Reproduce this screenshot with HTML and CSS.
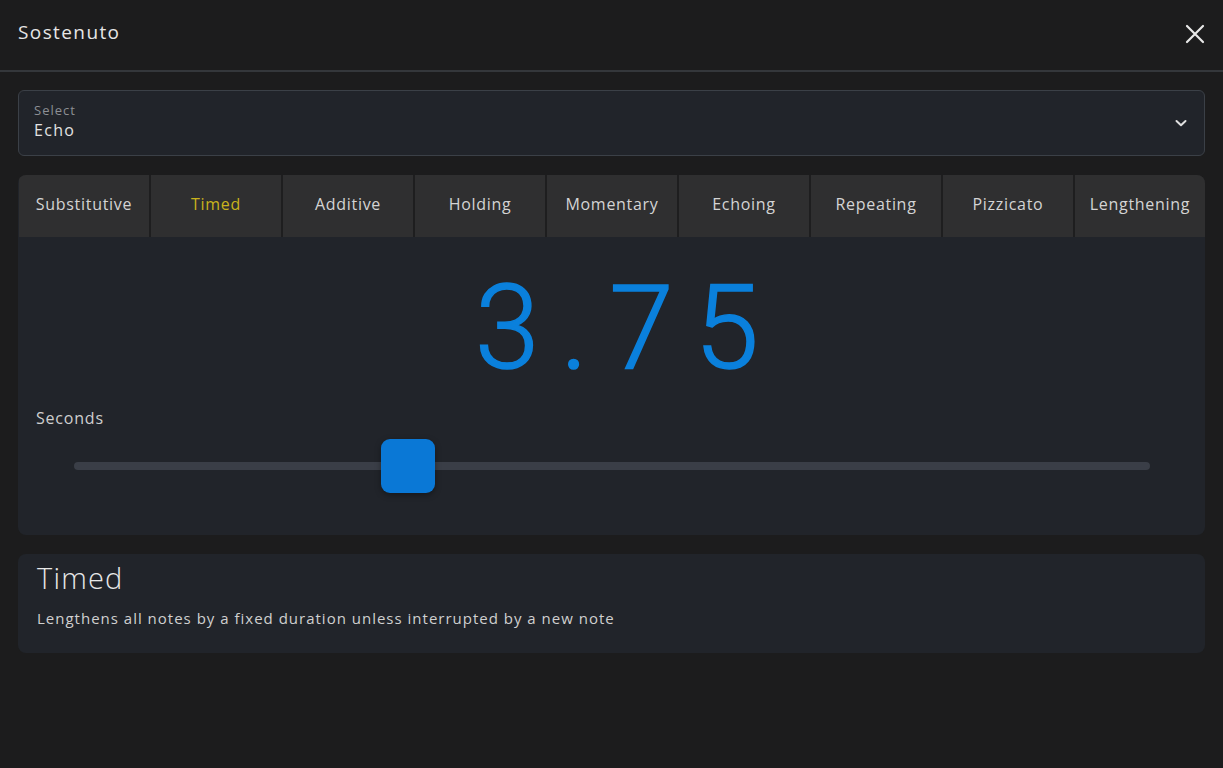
FILE: index.html
```html
<!doctype html>
<html>
<head>
<meta charset="utf-8">
<link rel="stylesheet" href="styles.css">
<title>Sostenuto</title>
</head>
<body>
<div class="header">
    <h2>Sostenuto</h2>
    <svg class="close" width="22" height="22" viewBox="0 0 22 22"><path d="M3 3L19 19M19 3L3 19" stroke="#e8e8e8" stroke-width="2.2" stroke-linecap="round"/></svg>
</div>
<div class="content">
    <div class="select">
        <div class="select-text">
            <span class="select-label">Select</span>
            <span class="select-value">Echo</span>
        </div>
        <svg width="14" height="10" viewBox="0 0 14 10"><path d="M2.5 3L7 7.2L11.5 3" fill="none" stroke="#e0e0e0" stroke-width="2" stroke-linecap="round" stroke-linejoin="round"/></svg>
    </div>

    <div class="panel">
        <div class="tabs">
            <div class="tab">Substitutive</div>
            <div class="tab active">Timed</div>
            <div class="tab">Additive</div>
            <div class="tab">Holding</div>
            <div class="tab">Momentary</div>
            <div class="tab">Echoing</div>
            <div class="tab">Repeating</div>
            <div class="tab">Pizzicato</div>
            <div class="tab">Lengthening</div>
        </div>
        <div class="panel-body">
            <div class="value">3.75</div>
            <div class="slider-label">Seconds</div>
            <div class="slider">
                <div class="track">
                    <div class="thumb" style="left: 28.5%"></div>
                </div>
            </div>
        </div>
    </div>

    <div class="info">
        <h3>Timed</h3>
        <p>Lengthens all notes by a fixed duration unless interrupted by a new note</p>
    </div>
</div>
</body>
</html>
```

FILE: styles.css
```css
h2,
h3,
p {
    margin: 0;
    padding: 0;
}
body {
    margin: 0;
    font-family: "Open Sans", Lato, sans-serif;
    color: #d6d6d6;
    background-color: #1c1c1d;
    height: 768px;
    overflow: hidden;
}
.header {
    height: 72px;
    box-sizing: border-box;
    padding: 0 18px;
    display: flex;
    align-items: center;
    justify-content: space-between;
    border-bottom: 2px solid #34373b;
}
.header h2 {
    font-size: 19px;
    font-weight: 400;
    color: #e6e6e6;
    letter-spacing: 1.4px;
    margin-top: -6px;
}
.close {
    margin-right: -1px;
    margin-top: -2px;
}
.content {
    padding: 18px 18px 0 18px;
}
.select {
    height: 66px;
    box-sizing: border-box;
    border: 1.5px solid #3b4047;
    border-radius: 6px;
    background-color: #21242a;
    padding: 0 16px 0 15px;
    display: flex;
    align-items: center;
    justify-content: space-between;
}
.select-text {
    display: flex;
    flex-direction: column;
    margin-top: -4px;
}
.select-label {
    font-size: 13px;
    letter-spacing: 1px;
    color: #8c8f94;
    line-height: 17px;
}
.select-value {
    font-size: 16px;
    letter-spacing: 1.3px;
    color: #e2e2e2;
    line-height: 22px;
}
.panel {
    margin-top: 19px;
    background-color: #21242a;
    border-radius: 8px;
    overflow: hidden;
}
.tabs {
    display: grid;
    grid-template-columns: repeat(9, 1fr);
    gap: 2px;
    background-color: #1e1e1f;
    margin-left: 1px;
}
.tab {
    height: 62px;
    box-sizing: border-box;
    padding-bottom: 4px;
    background-color: #2f2f30;
    display: flex;
    align-items: center;
    justify-content: center;
    font-size: 16px;
    letter-spacing: 0.7px;
    color: #d4d4d4;
}
.tab.active {
    color: #c9b31c;
}
.panel-body {
    height: 298px;
    padding: 0 18px;
}
.value {
    text-align: center;
    font-family: Roboto, "Liberation Sans", sans-serif;
    font-weight: 300;
    font-size: 116px;
    letter-spacing: 21px;
    line-height: 116px;
    color: #0a80dc;
    padding-top: 33px;
    padding-left: 32px;
    -webkit-text-stroke: 1.5px #0a80dc;
}
.slider-label {
    margin-top: 21px;
    font-size: 16px;
    letter-spacing: 0.8px;
    color: #cfcfcf;
}
.slider {
    padding: 0 37px 0 38px;
    margin-top: 10px;
    height: 54px;
    display: flex;
    align-items: center;
}
.track {
    position: relative;
    width: 100%;
    height: 8px;
    border-radius: 4px;
    background-color: #3a3e47;
}
.thumb {
    position: absolute;
    top: -23px;
    width: 54px;
    height: 54px;
    border-radius: 9px;
    background-color: #0a78d6;
    box-shadow: 0 2px 6px rgba(0, 0, 0, 0.35);
}
.info {
    margin-top: 19px;
    height: 99px;
    box-sizing: border-box;
    background-color: #21242a;
    border-radius: 8px;
    padding: 5px 19px;
}
.info h3 {
    font-size: 29px;
    font-weight: 300;
    letter-spacing: 1.2px;
    color: #e8e8e8;
    line-height: 38px;
}
.info p {
    margin-top: 11px;
    font-size: 15px;
    letter-spacing: 1px;
    color: #d0d0d0;
}
```
